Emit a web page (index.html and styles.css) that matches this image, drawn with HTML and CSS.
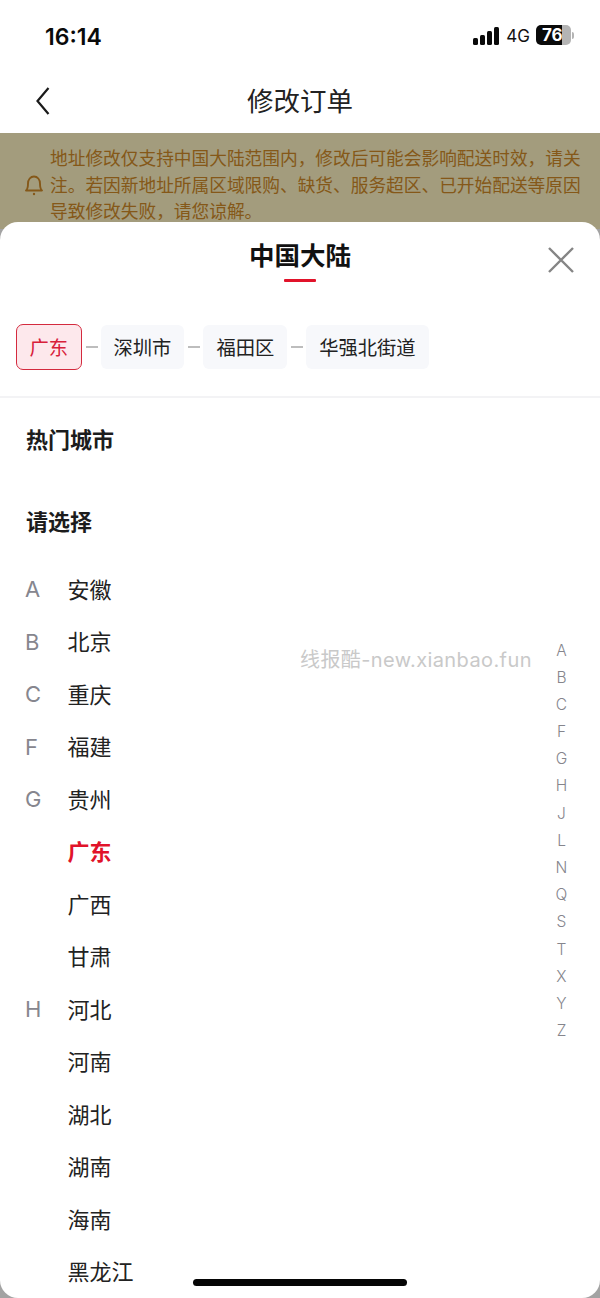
FILE: index.html
```html
<!DOCTYPE html>
<html lang="zh">
<head>
<meta charset="utf-8">
<title>修改订单</title>
<link rel="stylesheet" href="styles.css">
</head>
<body>
<div class="screen">
  <div class="status">
    <span class="time">16:14</span>
    <div class="status-right">
      <svg class="signal" width="27" height="18" viewBox="0 0 27 18"><rect x="0" y="11" width="5" height="7" rx="1.5"/><rect x="7" y="8" width="5" height="10" rx="1.5"/><rect x="14" y="4" width="5" height="14" rx="1.5"/><rect x="21" y="0" width="5" height="18" rx="1.5"/></svg>
      <span class="net">4G</span>
      <div class="battery"><span class="batt-fill">76</span><span class="batt-rest"></span><span class="batt-tip"></span></div>
    </div>
  </div>
  <div class="nav">
    <svg class="back" width="16" height="30" viewBox="0 0 16 30"><path d="M13.5 2 L2.5 15 L13.5 28" fill="none" stroke="#1a1a1a" stroke-width="2.2"/></svg>
    <span class="nav-title">修改订单</span>
  </div>
  <div class="notice">
    <svg class="bell" width="20" height="22" viewBox="0 0 20 22"><path d="M2 16.5 C4 15 4 13 4 9.5 C4 5.5 6.5 2.5 10 2.5 C13.5 2.5 16 5.5 16 9.5 C16 13 16 15 18 16.5 Z" fill="none" stroke="#d08a28" stroke-width="1.9" stroke-linejoin="round"/><circle cx="10" cy="20" r="1.2" fill="#d08a28"/></svg>
    <p class="notice-text">地址修改仅支持中国大陆范围内，修改后可能会影响配送时效，请关注。若因新地址所属区域限购、缺货、服务超区、已开始配送等原因导致修改失败，请您谅解。</p>
  </div>
  <div class="scrim"></div>
  <section class="sheet">
    <header class="sheet-head">
      <div class="tab"><span class="tab-label">中国大陆</span><span class="tab-line"></span></div>
      <svg class="close" width="28" height="28" viewBox="0 0 28 28"><path d="M2 2 L26 26 M26 2 L2 26" stroke="#858585" stroke-width="2.4" fill="none"/></svg>
    </header>
    <div class="crumbs">
      <span class="crumb active">广东</span><span class="dash"></span>
      <span class="crumb">深圳市</span><span class="dash"></span>
      <span class="crumb">福田区</span><span class="dash"></span>
      <span class="crumb">华强北街道</span>
    </div>
    <h3 class="section hot">热门城市</h3>
    <h3 class="section choose">请选择</h3>
    <ul class="list">
      <li><b>A</b><span>安徽</span></li>
      <li><b>B</b><span>北京</span></li>
      <li><b>C</b><span>重庆</span></li>
      <li><b>F</b><span>福建</span></li>
      <li><b>G</b><span>贵州</span></li>
      <li class="selected"><b></b><span>广东</span></li>
      <li><b></b><span>广西</span></li>
      <li><b></b><span>甘肃</span></li>
      <li><b>H</b><span>河北</span></li>
      <li><b></b><span>河南</span></li>
      <li><b></b><span>湖北</span></li>
      <li><b></b><span>湖南</span></li>
      <li><b></b><span>海南</span></li>
      <li><b></b><span>黑龙江</span></li>
    </ul>
    <div class="index">
      <span>A</span><span>B</span><span>C</span><span>F</span><span>G</span><span>H</span><span>J</span><span>L</span><span>N</span><span>Q</span><span>S</span><span>T</span><span>X</span><span>Y</span><span>Z</span>
    </div>
    <div class="watermark">线报酷-new.xianbao.fun</div>
  </section>
  <div class="home-bar"></div>
</div>
</body>
</html>
```

FILE: styles.css
```css
* { box-sizing: border-box; margin: 0; padding: 0; }
html, body { width: 600px; height: 1298px; overflow: hidden; background: #8a8a8a; }
body { font-family: "Noto Sans CJK SC", "Noto Sans", sans-serif; color: #1a1a1a; }

.screen { position: relative; width: 600px; height: 1298px; overflow: hidden; background: #fff; }

.status { height: 70px; display: flex; align-items: center; justify-content: space-between; padding: 3px 27px 0 45px; }
.time { font-family: Inter, "Liberation Sans", sans-serif; font-size: 23px; font-weight: 600; color: #0a0a0a; }
.status-right { display: flex; align-items: center; gap: 6px; margin-right: -1px; }
.signal { fill: #0a0a0a; margin-top: -2px; }
.net { font-family: Inter, "Liberation Sans", sans-serif; font-size: 17px; color: #111; margin-top: -1px; }
.battery { display: flex; align-items: center; width: 38px; height: 20px; margin-top: -3px; position: relative; }
.batt-fill { width: 26px; height: 20px; background: #0a0a0a; color: #fff; border-radius: 5px 0 0 5px; font-family: Inter, "Liberation Sans", sans-serif; font-weight: 700; font-size: 17px; line-height: 20px; padding-left: 6px; white-space: nowrap; }
.batt-rest { width: 9px; height: 20px; background: #b4b4b4; border-radius: 0 5px 5px 0; }
.batt-tip { width: 2px; height: 7px; background: #b4b4b4; margin-left: 1px; border-radius: 0 2px 2px 0; }

.nav { height: 63px; display: flex; align-items: center; justify-content: center; position: relative; }
.back { position: absolute; left: 35px; top: 16px; }
.nav-title { font-size: 26.5px; line-height: 1; color: #222; margin-top: -3px; }

.notice { height: 96px; background: #fff5c4; display: flex; align-items: center; padding: 6px 18px 0 24px; gap: 6px; }
.bell { flex: none; margin-top: 2px; }
.notice-text { font-size: 17.7px; line-height: 26.5px; color: #d08a28; width: 534px; }

.scrim { position: absolute; left: 0; right: 0; top: 133px; bottom: 0; background: rgba(0,0,0,.36); }

.sheet { position: absolute; left: 0; right: 0; top: 222px; bottom: 0; background: #fff; border-radius: 18px; overflow: hidden; }
.sheet-head { height: 103px; display: flex; justify-content: center; position: relative; }
.tab { display: flex; flex-direction: column; align-items: center; padding-top: 15px; }
.tab-label { font-size: 25.5px; line-height: 34px; font-weight: 600; color: #111; }
.tab-line { width: 32px; height: 3px; background: #e1132a; margin-top: 8px; border-radius: 1px; }
.close { position: absolute; right: 25px; top: 24px; }

.crumbs { height: 73px; display: flex; align-items: flex-start; padding-left: 16px; border-bottom: 2px solid #f3f3f5; }
.crumb { height: 44px; padding: 0 13px; display: flex; align-items: center; background: #f7f8fb; border-radius: 6px; font-size: 19.3px; color: #222; }
.crumb.active { height: 46px; margin-top: -1px; padding: 0 12.5px; background: #fde8ec; border: 1.5px solid #d42a3e; color: #d8203a; border-radius: 7px; }
.dash { width: 12px; height: 1.5px; background: #bdbdbd; margin: 21px 3px 0 4px; }

.section { font-size: 22px; font-weight: 600; line-height: 30px; color: #1c1c1c; padding-left: 26px; }
.hot { margin-top: 25px; }
.choose { margin-top: 52px; }

.list { list-style: none; margin-top: 26.5px; }
.list li { height: 52.5px; display: flex; align-items: center; }
.list b { width: 67.5px; padding-left: 25px; font-family: Inter, "Liberation Sans", sans-serif; font-weight: 400; font-size: 22px; line-height: 30px; margin-top: 3px; color: #86868e; }
.list span { font-size: 22px; color: #222; }
.list .selected span { color: #e1132a; font-weight: 600; }

.index { position: absolute; left: 546.5px; top: 414.5px; width: 30px; display: flex; flex-direction: column; align-items: center; }
.index span { height: 27.2px; line-height: 27.2px; font-family: Inter, "Liberation Sans", sans-serif; font-weight: 300; font-size: 15.5px; color: #85858c; }

.watermark { position: absolute; left: 300px; top: 424px; font-size: 20px; line-height: 28px; color: #c9c9c9; font-family: Inter, "Noto Sans CJK SC", sans-serif; letter-spacing: .4px; white-space: nowrap; }

.home-bar { position: absolute; left: 193px; top: 1279px; width: 214px; height: 7px; background: #050505; border-radius: 4px; }
```
